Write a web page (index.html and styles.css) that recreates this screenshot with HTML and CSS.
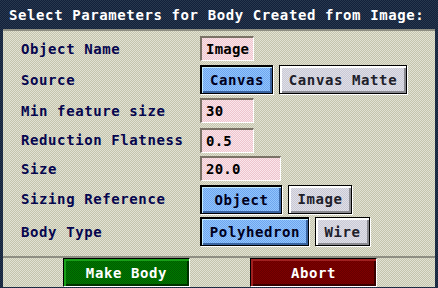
FILE: index.html
```html
<!DOCTYPE html>
<html>
<head>
<meta charset="utf-8">
<link rel="stylesheet" href="styles.css">
</head>
<body>
<div class="dialog">
  <div class="title">Select Parameters for Body Created from Image:</div>
  <div class="panel">
    <div class="form">
      <div class="label">Object Name</div>
      <div class="ctl"><div class="field w54">Image</div></div>

      <div class="label">Source</div>
      <div class="ctl">
        <div class="btn sel w72">Canvas</div>
        <div class="btn w128">Canvas Matte</div>
      </div>

      <div class="label">Min feature size</div>
      <div class="ctl"><div class="field w54">30</div></div>

      <div class="label">Reduction Flatness</div>
      <div class="ctl"><div class="field w54">0.5</div></div>

      <div class="label">Size</div>
      <div class="ctl"><div class="field w81">20.0</div></div>

      <div class="label">Sizing Reference</div>
      <div class="ctl">
        <div class="btn sel w82">Object</div>
        <div class="btn w64">Image</div>
      </div>

      <div class="label">Body Type</div>
      <div class="ctl">
        <div class="btn sel w108">Polyhedron</div>
        <div class="btn w55">Wire</div>
      </div>
    </div>
    <div class="actions">
      <div class="act green">Make Body</div>
      <div class="act red">Abort</div>
    </div>
  </div>
</div>
</body>
</html>
```

FILE: styles.css
```css
* { box-sizing: border-box; }
html, body { margin: 0; padding: 0; }
body {
  width: 438px;
  height: 288px;
  overflow: hidden;
  background: #1c2a3a;
  font-family: "DejaVu Sans Mono", "Liberation Mono", monospace;
  font-weight: bold;
  font-size: 14px;
  letter-spacing: 0.6px;
}
.dialog {
  width: 438px;
  height: 288px;
  display: flex;
  flex-direction: column;
  background: repeating-conic-gradient(#12203a 0 25%, #28384e 0 50%) 0 0 / 2px 2px;
}
.title {
  height: 29px;
  line-height: 30px;
  padding-left: 9px;
  color: #ffffff;
  white-space: nowrap;
}
.panel {
  margin: 0 3px 3px 3px;
  flex: 1;
  display: flex;
  flex-direction: column;
  background: repeating-conic-gradient(#c4c4ac 0 25%, #e2e2d4 0 50%) 0 0 / 2px 2px;
  border-top: 2px solid #8e8e82;
}
.form {
  display: grid;
  grid-template-columns: 180px 1fr;
  grid-template-rows: 31px 31px 31px 28px 29px 32px 33px;
  padding-top: 2px;
  padding-left: 18px;
  height: 222px;
}
.label {
  display: flex;
  align-items: center;
  color: #06064e;
  white-space: nowrap;
}
.ctl {
  display: flex;
  align-items: center;
  gap: 5px;
  margin-left: -1px;
}
.field {
  height: 25px;
  padding: 0 4px;
  display: flex;
  align-items: center;
  color: #000;
  letter-spacing: 0.2px;
  background: repeating-conic-gradient(#eec4cc 0 25%, #fae6ec 0 50%) 0 0 / 2px 2px;
  border-top: 2px solid #7a7266;
  border-left: 2px solid #7a7266;
  border-bottom: 1px solid #ffffff;
  border-right: 1px solid #ffffff;
}
.btn {
  height: 29px;
  display: flex;
  align-items: center;
  justify-content: center;
  color: #20202a;
  border: 1px solid #000;
  background: repeating-conic-gradient(#c8c8d4 0 25%, #e0e0e8 0 50%) 0 0 / 2px 2px;
  box-shadow: 1px 1px 0 #ffffff, inset 2px 2px 0 #ffffff, inset -2px -2px 0 #8a8a90;
  margin-right: 1px;
}
.btn.sel {
  color: #000020;
  border: 2px solid #000;
  border-bottom-width: 1px;
  border-right-width: 1px;
  background: repeating-conic-gradient(#6ea6ee 0 25%, #92c4fc 0 50%) 0 0 / 2px 2px;
  box-shadow: 1px 1px 0 #ffffff, inset 1px 1px 0 #c4ecff, inset -2px -2px 0 #3a64a0;
}
.w54 { width: 54px; }
.w81 { width: 81px; }
.w72 { width: 73px; }
.w128 { width: 128px; }
.w82 { width: 82px; }
.w64 { width: 64px; }
.w108 { width: 109px; }
.w55 { width: 55px; }
.actions {
  border-top: 2px solid #8e8e82;
  margin-top: 3px;
  flex: 1;
  display: flex;
  align-items: center;
  padding-left: 60px;
  gap: 60px;
}
.act {
  width: 127px;
  height: 29px;
  display: flex;
  align-items: center;
  justify-content: center;
  color: #ffffff;
  border-top: 1px solid #000;
  border-left: 1px solid #000;
  border-right: 1px solid #fff;
  border-bottom: 1px solid #fff;
}
.green {
  background: repeating-conic-gradient(#005c00 0 25%, #007800 0 50%) 0 0 / 2px 2px;
  box-shadow: inset 2px 2px 0 #18a018, inset -2px -2px 0 #003000;
}
.red {
  background: repeating-conic-gradient(#660000 0 25%, #7e0000 0 50%) 0 0 / 2px 2px;
  box-shadow: inset 2px 2px 0 #a02020, inset -2px -2px 0 #380000;
}
```
